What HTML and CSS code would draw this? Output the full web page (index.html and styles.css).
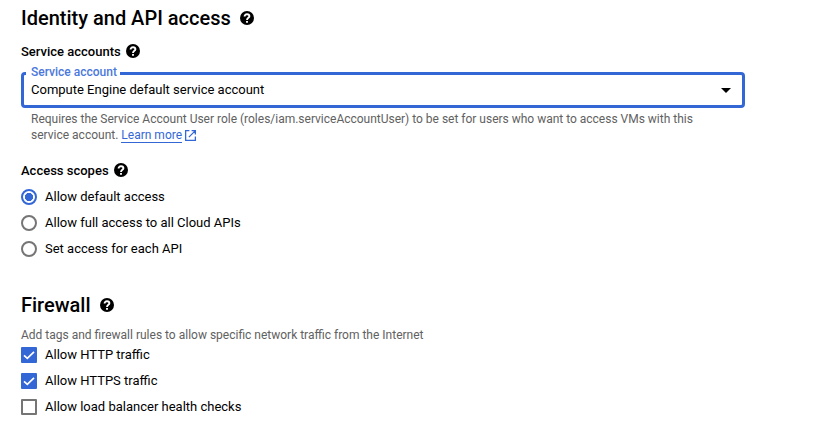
FILE: index.html
```html
<!DOCTYPE html>
<html lang="en">
<head>
<meta charset="utf-8">
<title>Create an instance</title>
<link rel="stylesheet" href="styles.css">
</head>
<body>
<svg class="defs" aria-hidden="true">
  <symbol id="help" viewBox="0 0 14 14"><circle cx="7" cy="7" r="7"/><path d="M4.600 5.600C4.600 4.100 5.600 3.300 7 3.300S9.400 4.100 9.400 5.300C9.400 6.800 7 6.900 7 9" fill="none" stroke="#fff" stroke-width="1.900"/><path d="M6.050 9.900h1.900v1.800h-1.900z" fill="#fff"/></symbol>
  <symbol id="tick" viewBox="0 0 16 16"><path d="M3 8.400l3.300 3L13 4.800"/></symbol>
</svg>
<main class="form">
  <section>
    <h2 class="title">Identity and API access <svg class="help"><use href="#help"/></svg></h2>
    <h3 class="subtitle">Service accounts <svg class="help"><use href="#help"/></svg></h3>
    <div class="select">
      <span class="select-label">Service account</span>
      <span class="select-value">Compute Engine default service account</span>
      <svg class="caret" viewBox="0 0 10 5"><path d="M0 0h10L5 5z"/></svg>
    </div>
    <p class="hint"><span class="hint-line">Requires the Service Account User role (roles/iam.serviceAccountUser) to be set for users who want to access VMs with this</span><br>service account. <a class="link" href="#">Learn more</a><svg class="external" viewBox="0 0 12 12"><path d="M5 1.500H1.500v9h9V7M7 1.500h3.500V5M10.500 1.500L4.500 7.500"/></svg></p>
    <h3 class="subtitle scopes">Access scopes <svg class="help"><use href="#help"/></svg></h3>
    <div class="options">
      <label class="option"><span class="radio selected"></span><span class="option-text">Allow default access</span></label>
      <label class="option"><span class="radio"></span><span class="option-text">Allow full access to all Cloud APIs</span></label>
      <label class="option"><span class="radio"></span><span class="option-text">Set access for each API</span></label>
    </div>
  </section>
  <section class="firewall">
    <h2 class="title">Firewall <svg class="help"><use href="#help"/></svg></h2>
    <p class="description">Add tags and firewall rules to allow specific network traffic from the Internet</p>
    <div class="options checks">
      <label class="option"><span class="checkbox checked"><svg class="tick"><use href="#tick"/></svg></span><span class="option-text">Allow HTTP traffic</span></label>
      <label class="option"><span class="checkbox checked"><svg class="tick"><use href="#tick"/></svg></span><span class="option-text">Allow HTTPS traffic</span></label>
      <label class="option"><span class="checkbox"></span><span class="option-text">Allow load balancer health checks</span></label>
    </div>
  </section>
</main>
</body>
</html>
```
FILE: styles.css
```css
* { box-sizing: border-box; }
body { margin: 0; background: #fff; color: #000; font-family: Roboto, sans-serif; font-size: 13px; }
h2, h3, p { margin: 0; }
.defs { position: absolute; width: 0; height: 0; }
.form { width: 745px; padding: 6px 0 0 21px; }
.title { display: flex; align-items: center; height: 24px; gap: 9px; font-size: 20px; font-weight: 500; white-space: nowrap; }
.help { width: 14px; height: 14px; flex: none; }
.subtitle { display: flex; align-items: center; height: 18px; margin-top: 12px; gap: 5px; font-size: 13px; font-weight: 500; white-space: nowrap; }
.select { position: relative; display: flex; align-items: center; justify-content: space-between; width: 724px; height: 36px; margin-top: 12px; padding: 0 11px 0 7px; border: 3px solid #3367d6; border-radius: 4px; }
.select-label { position: absolute; top: -10px; left: 2px; width: 94px; padding-left: 5px; background: #fff; color: #4a78dc; font-size: 12px; font-weight: 500; line-height: 14px; white-space: nowrap; }
.select-value { padding-bottom: 2px; }
.caret { width: 10px; height: 5px; }
.hint { margin: 3px 0 0 10px; color: #616161; font-size: 12px; line-height: 16px; white-space: nowrap; }
.hint-line { letter-spacing: -0.008px; }
.link { color: #3367d6; text-decoration: none; border-bottom: 1px solid #3367d6; }
.external { width: 13px; height: 13px; margin-left: 1.500px; vertical-align: -2.500px; fill: none; stroke: #3367d6; stroke-width: 1.200; }
.scopes { margin-top: 18px; }
.options { margin-top: 5px; }
.option { display: flex; align-items: center; height: 26px; gap: 8px; white-space: nowrap; }
.option-text { padding-bottom: 2px; }
.radio { width: 16px; height: 16px; border: 2px solid #757575; border-radius: 50%; }
.radio.selected { border-color: #3367d6; background: radial-gradient(circle, #3367d6 3.800px, #fff 4.400px); }
.firewall { margin-top: 31px; }
.description { margin-top: 9px; color: #616161; font-size: 12px; line-height: 18px; }
.checks { margin-top: -2px; }
.checkbox { width: 16px; height: 16px; border: 2px solid #757575; border-radius: 1px; }
.checkbox.checked { border: 0; background: #3367d6; }
.tick { display: block; width: 16px; height: 16px; fill: none; stroke: #fff; stroke-width: 1.700; }
```
